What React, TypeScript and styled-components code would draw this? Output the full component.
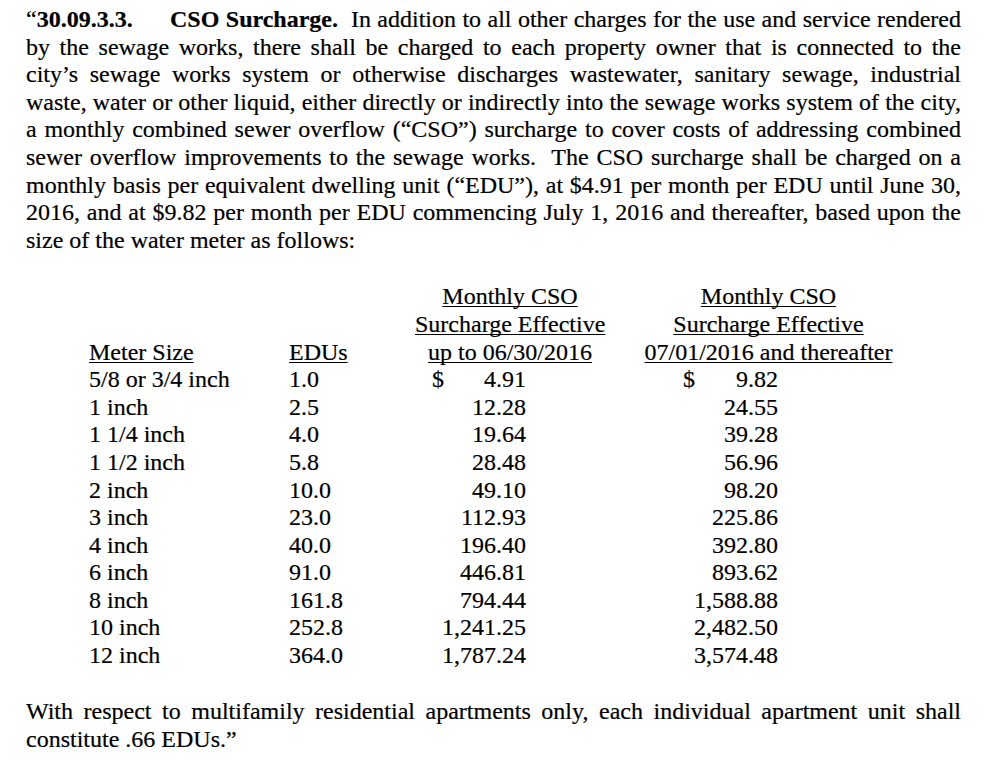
import styled, { createGlobalStyle } from 'styled-components';

const GlobalStyle = createGlobalStyle`
  html, body {
    margin: 0;
    padding: 0;
    background: #fff;
  }
  body {
    font-family: "Liberation Serif", "Times New Roman", serif;
    color: #000;
    -webkit-text-stroke: 0.2px #000;
  }
`;

const LINE = 27.6;

const Page = styled.div`
  width: 935px;
  padding: 6px 0 0 26px;
  font-size: 24px;
  line-height: ${LINE}px;
`;

const Paragraph = styled.div<{ $mt?: number }>`
  margin-top: ${(p) => p.$mt ?? 0}px;
`;

// one printed line of the justified source text
const Line = styled.div<{ $last?: boolean }>`
  text-align: ${(p) => (p.$last ? 'left' : 'justify')};
  text-align-last: ${(p) => (p.$last ? 'left' : 'justify')};
  word-spacing: ${(p) => (p.$last ? 0 : -0.6)}px;
`;

const LeadLine = styled.div`
  display: flex;
`;

const SectionNo = styled.span`
  flex: none;
  width: 144px;
`;

const LeadRest = styled(Line)`
  flex: 1;
`;

const Bold = styled.b`
  font-weight: 700;
`;

const Table = styled.div`
  display: flex;
  margin: 29px 0 0 63px;
`;

const Col = styled.div<{ $w: number; $ml?: number }>`
  width: ${(p) => p.$w}px;
  margin-left: ${(p) => p.$ml ?? 0}px;
  display: flex;
  flex-direction: column;
`;

const Head = styled.div<{ $center?: boolean }>`
  height: ${LINE * 3}px;
  display: flex;
  flex-direction: column;
  justify-content: flex-end;
  text-align: ${(p) => (p.$center ? 'center' : 'left')};
`;

const HeadLine = styled.div`
  white-space: nowrap;
  text-decoration: underline;
  text-decoration-thickness: 1.4px;
  text-underline-offset: 2px;
  text-decoration-skip-ink: none;
`;

const Cell = styled.div`
  white-space: nowrap;
`;

const Amount = styled.div<{ $dollar: number; $right: number }>`
  display: flex;
  justify-content: space-between;
  padding: 0 ${(p) => p.$right}px 0 ${(p) => p.$dollar}px;
  white-space: nowrap;
`;

const rows = [
  ['5/8 or 3/4 inch', '1.0', '4.91', '9.82'],
  ['1 inch', '2.5', '12.28', '24.55'],
  ['1 1/4 inch', '4.0', '19.64', '39.28'],
  ['1 1/2 inch', '5.8', '28.48', '56.96'],
  ['2 inch', '10.0', '49.10', '98.20'],
  ['3 inch', '23.0', '112.93', '225.86'],
  ['4 inch', '40.0', '196.40', '392.80'],
  ['6 inch', '91.0', '446.81', '893.62'],
  ['8 inch', '161.8', '794.44', '1,588.88'],
  ['10 inch', '252.8', '1,241.25', '2,482.50'],
  ['12 inch', '364.0', '1,787.24', '3,574.48'],
];

const body = [
  'by the sewage works, there shall be charged to each property owner that is connected to the',
  'city’s sewage works system or otherwise discharges wastewater, sanitary sewage, industrial',
  'waste, water or other liquid, either directly or indirectly into the sewage works system of the city,',
  'a monthly combined sewer overflow (“CSO”) surcharge to cover costs of addressing combined',
  'sewer overflow improvements to the sewage works.\u00a0 The CSO surcharge shall be charged on a',
  'monthly basis per equivalent dwelling unit (“EDU”), at $4.91 per month per EDU until June 30,',
  '2016, and at $9.82 per month per EDU commencing July 1, 2016 and thereafter, based upon the',
];

export default function App() {
  return (
    <>
      <GlobalStyle />
      <Page>
        <Paragraph>
          <LeadLine>
            <SectionNo>
              “<Bold>30.09.3.3.</Bold>
            </SectionNo>
            <LeadRest>
              <Bold>CSO Surcharge.</Bold>{'\u00a0 '}In addition to all other charges for the use and service rendered
            </LeadRest>
          </LeadLine>
          {body.map((t) => (
            <Line key={t}>{t}</Line>
          ))}
          <Line $last>size of the water meter as follows:</Line>
        </Paragraph>

        <Table>
          <Col $w={200}>
            <Head>
              <HeadLine>Meter Size</HeadLine>
            </Head>
            {rows.map((r) => (
              <Cell key={r[0]}>{r[0]}</Cell>
            ))}
          </Col>
          <Col $w={126}>
            <Head>
              <HeadLine>EDUs</HeadLine>
            </Head>
            {rows.map((r) => (
              <Cell key={r[0]}>{r[1]}</Cell>
            ))}
          </Col>
          <Col $w={190}>
            <Head $center>
              <HeadLine>Monthly CSO</HeadLine>
              <HeadLine>Surcharge Effective</HeadLine>
              <HeadLine>up to 06/30/2016</HeadLine>
            </Head>
            {rows.map((r, i) => (
              <Amount key={r[0]} $dollar={17} $right={79}>
                <span>{i === 0 ? '$' : ''}</span>
                <span>{r[2]}</span>
              </Amount>
            ))}
          </Col>
          <Col $w={257} $ml={35}>
            <Head $center>
              <HeadLine>Monthly CSO</HeadLine>
              <HeadLine>Surcharge Effective</HeadLine>
              <HeadLine>07/01/2016 and thereafter</HeadLine>
            </Head>
            {rows.map((r, i) => (
              <Amount key={r[0]} $dollar={43} $right={119}>
                <span>{i === 0 ? '$' : ''}</span>
                <span>{r[3]}</span>
              </Amount>
            ))}
          </Col>
        </Table>

        <Paragraph $mt={LINE + 1}>
          <Line>With respect to multifamily residential apartments only, each individual apartment unit shall</Line>
          <Line $last>constitute .66 EDUs.”</Line>
        </Paragraph>
      </Page>
    </>
  );
}
